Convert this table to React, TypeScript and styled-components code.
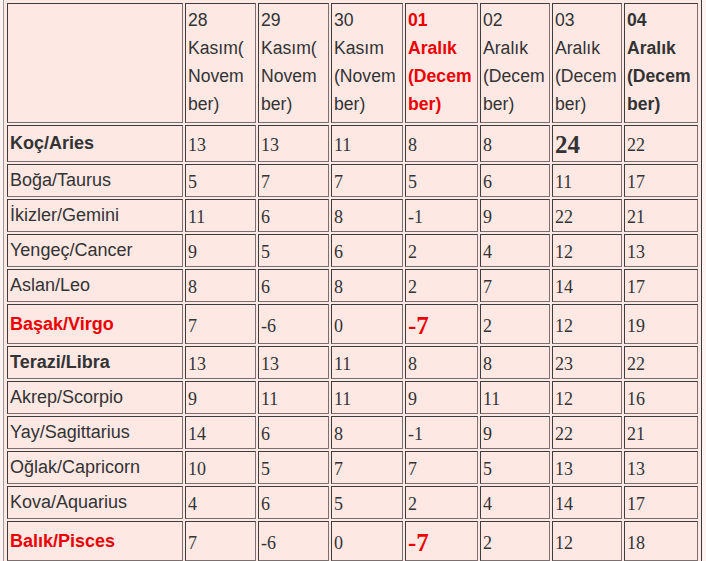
import React from 'react';
import styled, { createGlobalStyle } from 'styled-components';

const GlobalStyle = createGlobalStyle`
  html, body {
    margin: 0;
    padding: 0;
    background: #fdf3f1;
  }
`;

const Table = styled.table`
  margin: -1px 0 0 3px;
  width: 699px;
  table-layout: fixed;
  border-collapse: separate;
  border-spacing: 2px;
  padding: 1px;
  background: #fde8e4;
  border: 1px solid;
  border-color: #a09a9a #3a3a3a #3a3a3a #a09a9a;
  color: #333;
`;

const HeadCell = styled.th<{ $red?: boolean; $bold?: boolean }>`
  padding: 2px 2px 4px;
  text-align: left;
  vertical-align: top;
  font-family: 'Liberation Sans', Arial, sans-serif;
  font-size: 17.6px;
  line-height: 28px;
  font-weight: ${(p) => (p.$bold ? 'bold' : 'normal')};
  color: ${(p) => (p.$red ? '#ec0000' : '#333')};
  border: 1px solid;
  border-color: #3d3d3d #7a7070 #7a7070 #3d3d3d;
  overflow: hidden;
`;

const SignCell = styled(HeadCell)`
  padding: 1px 2px 2px;
  vertical-align: middle;
  white-space: nowrap;
  font-size: 18px;
`;

const NumCell = styled.td`
  padding: 3px 2px 0;
  vertical-align: middle;
  font-family: 'Liberation Serif', Georgia, serif;
  font-size: 18px;
  line-height: 28px;
  color: #333;
  border: 1px solid;
  border-color: #3d3d3d #7a7070 #7a7070 #3d3d3d;
`;

const Big = styled.span<{ $red?: boolean }>`
  display: inline-block;
  font-size: 25px;
  font-weight: bold;
  line-height: ${(p) => (p.$red ? '35px' : '32px')};
  color: ${(p) => (p.$red ? '#ec0000' : '#333')};
`;

type Head = { lines: string[]; red?: boolean; bold?: boolean };

const heads: Head[] = [
  { lines: ['28', 'Kasım(', 'Novem', 'ber)'] },
  { lines: ['29', 'Kasım(', 'Novem', 'ber)'] },
  { lines: ['30', 'Kasım', '(Novem', 'ber)'] },
  { lines: ['01', 'Aralık', '(Decem', 'ber)'], red: true, bold: true },
  { lines: ['02', 'Aralık', '(Decem', 'ber)'] },
  { lines: ['03', 'Aralık', '(Decem', 'ber)'] },
  { lines: ['04', 'Aralık', '(Decem', 'ber)'], bold: true },
];

type Row = {
  sign: string;
  red?: boolean;
  bold?: boolean;
  values: string[];
  big?: number;
};

const rows: Row[] = [
  { sign: 'Koç/Aries', bold: true, values: ['13', '13', '11', '8', '8', '24', '22'], big: 5 },
  { sign: 'Boğa/Taurus', values: ['5', '7', '7', '5', '6', '11', '17'] },
  { sign: 'İkizler/Gemini', values: ['11', '6', '8', '-1', '9', '22', '21'] },
  { sign: 'Yengeç/Cancer', values: ['9', '5', '6', '2', '4', '12', '13'] },
  { sign: 'Aslan/Leo', values: ['8', '6', '8', '2', '7', '14', '17'] },
  { sign: 'Başak/Virgo', red: true, bold: true, values: ['7', '-6', '0', '-7', '2', '12', '19'], big: 3 },
  { sign: 'Terazi/Libra', bold: true, values: ['13', '13', '11', '8', '8', '23', '22'] },
  { sign: 'Akrep/Scorpio', values: ['9', '11', '11', '9', '11', '12', '16'] },
  { sign: 'Yay/Sagittarius', values: ['14', '6', '8', '-1', '9', '22', '21'] },
  { sign: 'Oğlak/Capricorn', values: ['10', '5', '7', '7', '5', '13', '13'] },
  { sign: 'Kova/Aquarius', values: ['4', '6', '5', '2', '4', '14', '17'] },
  { sign: 'Balık/Pisces', red: true, bold: true, values: ['7', '-6', '0', '-7', '2', '12', '18'], big: 3 },
];

const colWidths = [176, 71, 71, 72, 73, 70, 70, 74];

export default function App() {
  return (
    <>
      <GlobalStyle />
      <Table>
        <colgroup>
          {colWidths.map((w, i) => (
            <col key={i} style={{ width: w }} />
          ))}
        </colgroup>
        <tbody>
          <tr>
            <HeadCell />
            {heads.map((h, i) => (
              <HeadCell key={i} $red={h.red} $bold={h.bold}>
                {h.lines.map((l, j) => (
                  <React.Fragment key={j}>
                    {j > 0 && <br />}
                    {l}
                  </React.Fragment>
                ))}
              </HeadCell>
            ))}
          </tr>
          {rows.map((r) => (
            <tr key={r.sign}>
              <SignCell $red={r.red} $bold={r.bold}>
                {r.sign}
              </SignCell>
              {r.values.map((v, i) => (
                <NumCell key={i}>
                  {i === r.big ? <Big $red={r.red}>{v}</Big> : v}
                </NumCell>
              ))}
            </tr>
          ))}
        </tbody>
      </Table>
    </>
  );
}
